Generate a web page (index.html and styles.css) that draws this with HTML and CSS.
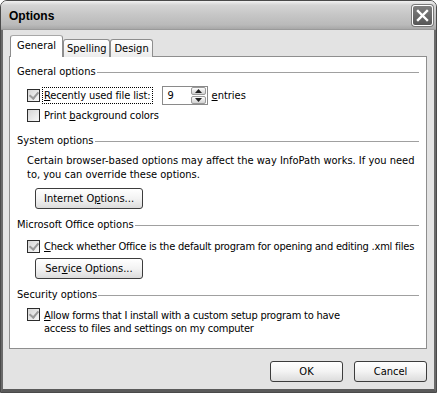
FILE: index.html
```html
<!DOCTYPE html>
<html lang="en">
<head>
  <meta charset="UTF-8" />
  <title>Options</title>
  <link rel="stylesheet" href="styles.css">
</head>
<body>
  <div class="window">
    <div class="titlebar">
      <span class="title">Options</span>
      <div class="close">
        <svg width="13" height="13" viewBox="0 0 13 13"><path d="M2 2 L11 11 M11 2 L2 11" stroke="#fff" stroke-width="2.4" stroke-linecap="square"/></svg>
      </div>
    </div>

    <div class="frame">
      <div class="tabs">
        <div class="tab active">General</div>
        <div class="tab">Spelling</div>
        <div class="tab">Design</div>
      </div>

      <div class="panel">
        <div class="group-title"><span>General options</span></div>
        <div class="row first">
          <span class="check on"></span>
          <span class="label focus"><u>R</u>ecently used file list:</span>
          <div class="spin">
            <span class="spin-value">9</span>
            <div class="spin-btns">
              <div class="spin-btn">
                <svg width="7" height="4" viewBox="0 0 7 4"><path d="M0 4 L3.5 0 L7 4 Z" fill="#222"/></svg>
              </div>
              <div class="spin-btn">
                <svg width="7" height="4" viewBox="0 0 7 4"><path d="M0 0 L3.5 4 L7 0 Z" fill="#222"/></svg>
              </div>
            </div>
          </div>
          <span class="after"><u>e</u>ntries</span>
        </div>
        <div class="row">
          <span class="check"></span>
          <span class="label">Print <u>b</u>ackground colors</span>
        </div>

        <div class="group-title"><span>System options</span></div>
        <p class="note">Certain browser-based options may affect the way InfoPath works. If you need<br>to, you can override these options.</p>
        <button class="btn wide">Internet O<u>p</u>tions...</button>

        <div class="group-title"><span>Microsoft Office options</span></div>
        <div class="row tight">
          <span class="check on"></span>
          <span class="label narrow"><u>C</u>heck whether Office is the default program for opening and editing .xml files</span>
        </div>
        <button class="btn wide next">Ser<u>v</u>ice Options...</button>

        <div class="group-title"><span>Security options</span></div>
        <div class="row top">
          <span class="check on"></span>
          <span class="label narrow"><u>A</u>llow forms that I install with a custom setup program to have<br>access to files and settings on my computer</span>
        </div>
      </div>

      <div class="actions">
        <button class="btn">OK</button>
        <button class="btn">Cancel</button>
      </div>
    </div>
  </div>
</body>
</html>
```

FILE: styles.css
```css
* {
  box-sizing: border-box;
}

body {
  margin: 0;
  background: #fff;
  font-family: "DejaVu Sans Condensed", "DejaVu Sans", sans-serif;
  font-size: 11px;
  color: #000;
}

.window {
  width: 437px;
  height: 393px;
  border: 1px solid #4a4a4a;
  border-radius: 7px 7px 0 0;
  background: #e3e3e3;
  display: flex;
  flex-direction: column;
  overflow: hidden;
}

.titlebar {
  height: 29px;
  flex-shrink: 0;
  display: flex;
  align-items: center;
  justify-content: space-between;
  padding: 0 3px 0 8px;
  background: linear-gradient(#f2f2f2 0%, #d4d4d4 15%, #c6c6c6 50%, #bababa 85%, #a8a8a8 100%);
  border-bottom: 1px solid #9a9a9a;
}

.title {
  font-family: "Liberation Sans", sans-serif;
  font-weight: bold;
  font-size: 12px;
  margin-top: 2px;
}

.close {
  width: 21px;
  height: 21px;
  border: 1px solid #fff;
  border-radius: 3px;
  background: linear-gradient(#7e7e7e, #575757);
  display: flex;
  align-items: center;
  justify-content: center;
  box-shadow: 0 0 0 1px #7a7a7a;
}

.frame {
  flex: 1;
  display: flex;
  flex-direction: column;
  border-left: 2px solid #6a6a6a;
  border-right: 2px solid #6a6a6a;
  border-bottom: 3px solid #5a5a5a;
  padding: 5px 7px 0 6px;
}

.tabs {
  display: flex;
  align-items: flex-end;
  height: 22px;
  flex-shrink: 0;
  position: relative;
  z-index: 1;
  margin-bottom: -1px;
}

.tab {
  height: 18px;
  padding: 0 3px;
  line-height: 17px;
  border: 1px solid #8e8e8e;
  border-bottom: none;
  border-radius: 3px 3px 0 0;
  background: linear-gradient(#ffffff, #ececec);
}

.tab.active {
  height: 22px;
  line-height: 20px;
  padding: 0 6px;
  background: #fff;
  margin-left: 1px;
  border-top-color: #a8a8a8;
}

.panel {
  height: 293px;
  flex-shrink: 0;
  background: #fff;
  border: 1px solid #8e8e8e;
  padding: 8px 7px 0 7px;
}

.group-title {
  display: flex;
  align-items: center;
  line-height: 14px;
  margin-top: 9px;
}

.group-title:first-child {
  margin-top: 0;
}

.group-title::after {
  content: "";
  flex: 1;
  border-top: 1px solid #a0a0a0;
  margin-left: 1px;
}

.row {
  display: flex;
  align-items: center;
  height: 20px;
  padding-left: 10px;
  white-space: nowrap;
}

.row.first {
  margin-top: 6px;
}

.row.tight {
  margin-top: 5px;
  height: 18px;
}

.row.top {
  align-items: flex-start;
  height: auto;
  margin-top: 6px;
  line-height: 13px;
}

.row.top .check {
  margin-top: 0;
}

.check {
  width: 13px;
  height: 13px;
  border: 1px solid #2c2c2c;
  background: linear-gradient(135deg, #d6d6d6, #f8f8f8);
  flex-shrink: 0;
  margin-right: 2px;
  position: relative;
}

.check.on::after {
  content: "";
  position: absolute;
  left: 3px;
  top: 0px;
  width: 4px;
  height: 7px;
  border-right: 2px solid #9a9a9a;
  border-bottom: 2px solid #9a9a9a;
  transform: rotate(40deg);
}

.label {
  padding: 0 1px;
  border: 1px solid transparent;
  letter-spacing: -0.1px;
}

.label.narrow {
  letter-spacing: -0.22px;
}

.label.focus {
  border: 1px dotted #000;
  padding: 1px 1px;
}

.spin {
  width: 46px;
  height: 19px;
  border: 1px solid #8a8a8a;
  margin-left: 9px;
  display: flex;
  justify-content: space-between;
  align-items: center;
  padding-left: 5px;
}

.spin-btns {
  display: flex;
  flex-direction: column;
  gap: 1px;
  padding: 1px;
}

.spin-btn {
  width: 15px;
  height: 8px;
  border: 1px solid #9a9a9a;
  border-radius: 2px;
  background: linear-gradient(#fdfdfd, #d2d2d2);
  display: flex;
  align-items: center;
  justify-content: center;
}

.after {
  margin-left: 4px;
}

.note {
  margin: 6px 0 0 10px;
  line-height: 14px;
  white-space: nowrap;
}

.btn {
  font-family: inherit;
  font-size: 11px;
  color: #000;
  height: 21px;
  border: 1px solid #3c3c3c;
  border-radius: 3px;
  background: linear-gradient(#ffffff 0%, #f3f3f3 50%, #dcdcdc 100%);
  padding: 0;
  display: block;
}

.btn.wide {
  width: 108px;
  margin: 6px 0 0 18px;
}

.btn.next {
  margin-top: 3px;
}

.actions {
  display: flex;
  justify-content: flex-end;
  gap: 11px;
  margin-top: 12px;
}

.actions .btn {
  width: 73px;
}
```
